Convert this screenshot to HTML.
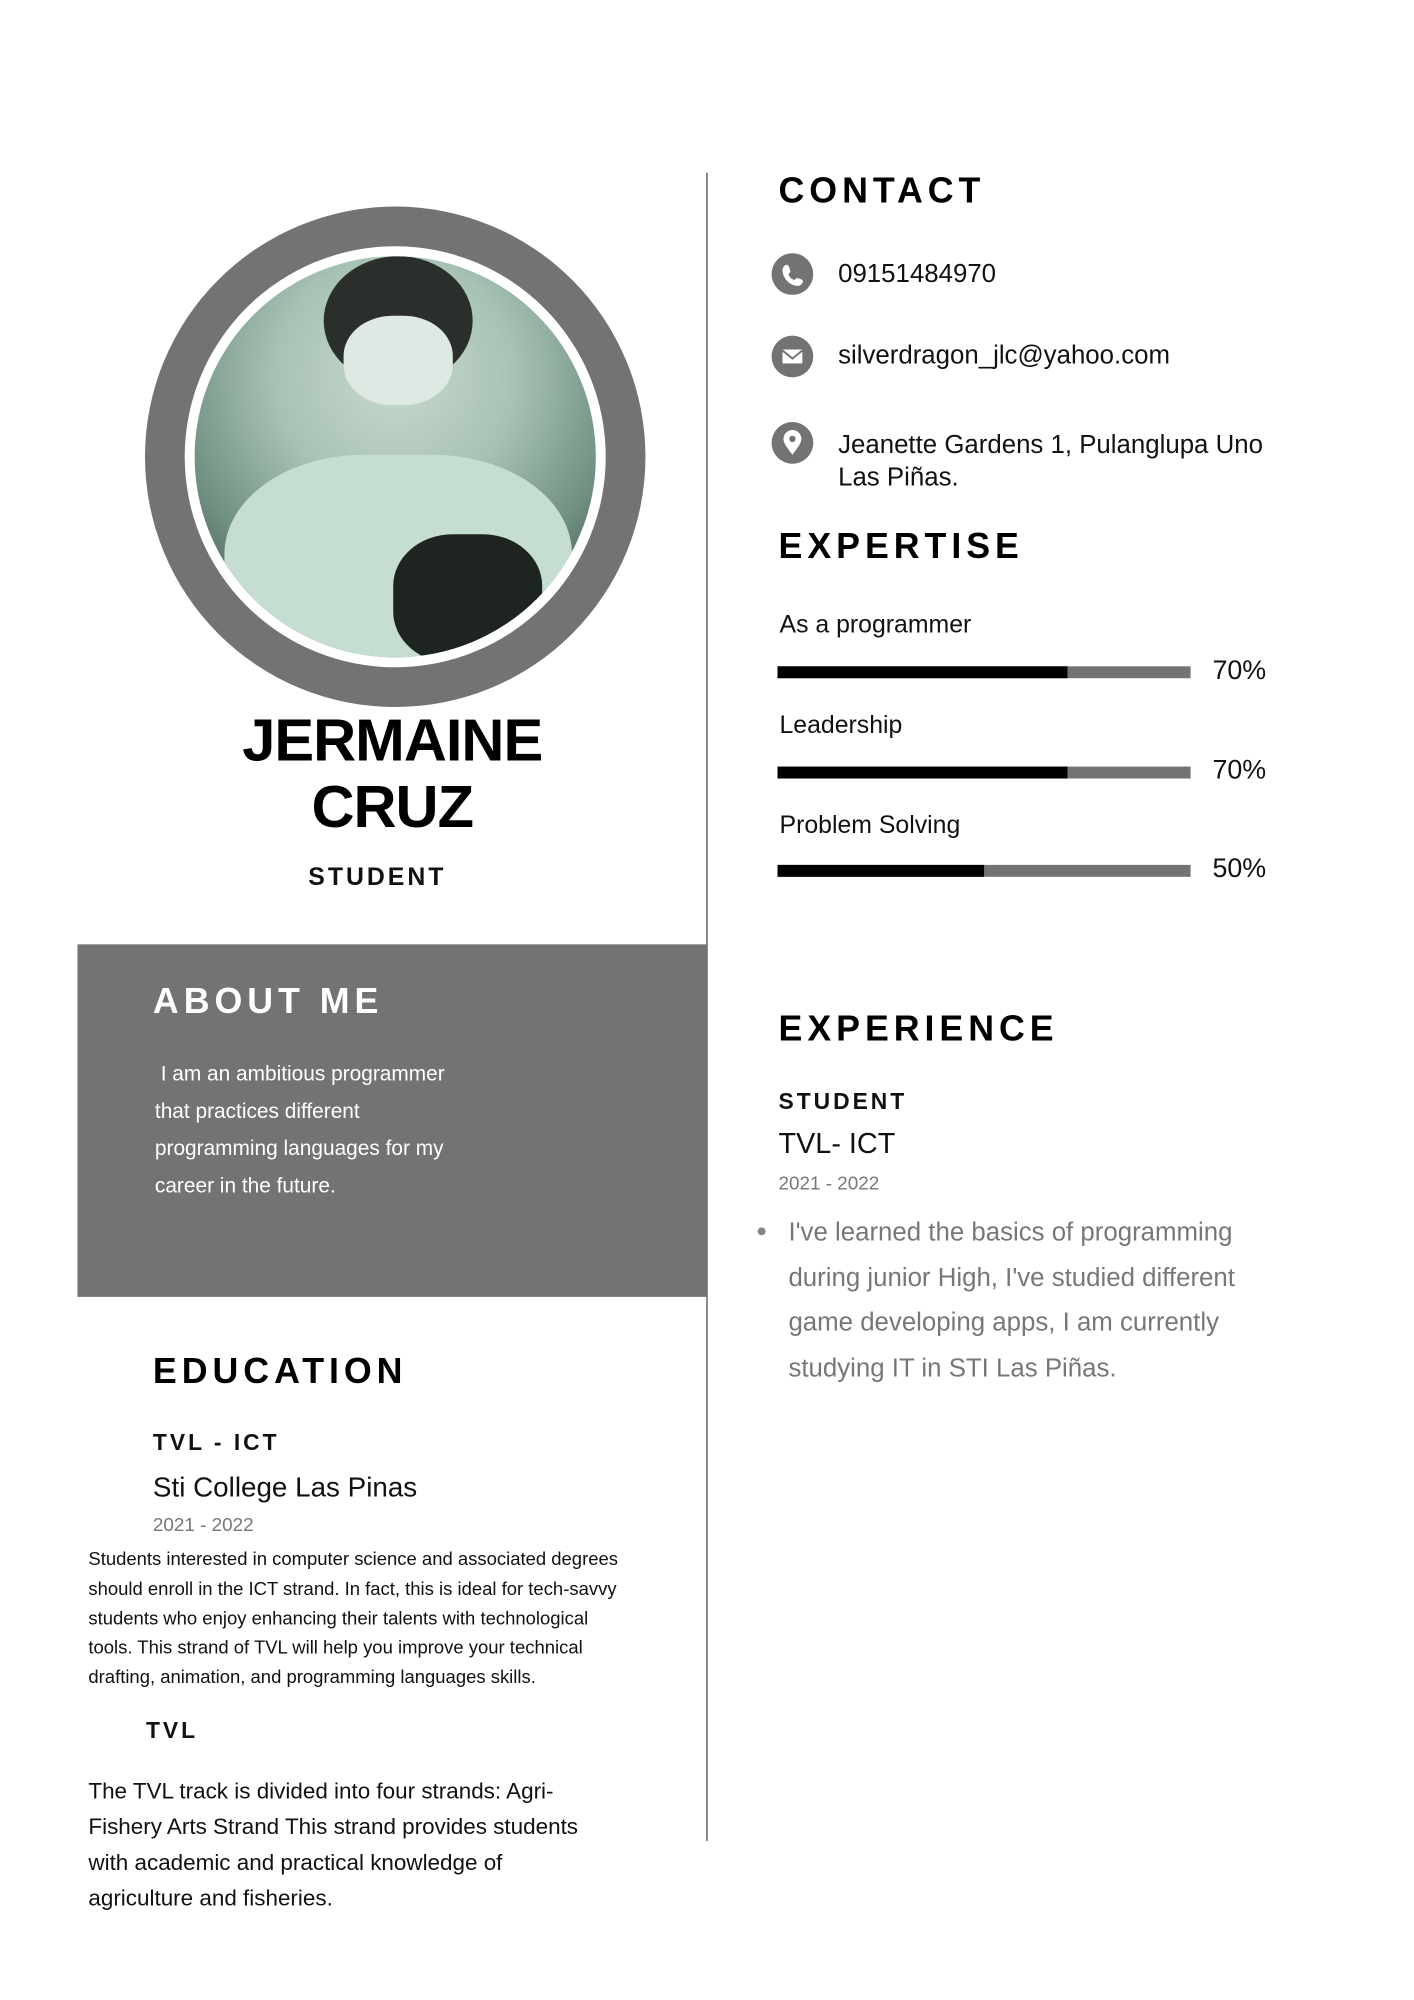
<!DOCTYPE html>
<html><head><meta charset="utf-8"><style>
*{margin:0;padding:0;box-sizing:border-box}
body{width:1414px;height:2000px;background:#fff;position:relative;font-family:"Liberation Sans",sans-serif;color:#111;overflow:hidden}
#w{position:absolute;left:0;top:0;width:1414px;height:2000px;transform:scale(0.993);transform-origin:0 0}
.a{position:absolute;white-space:nowrap}
.h{font-weight:bold;letter-spacing:5px;font-size:36px;color:#000}
.ic{position:absolute;width:42px;height:42px;border-radius:50%;background:#737373}
.bar{position:absolute;left:783px;width:416px;height:12px;background:#737373}
.bar i{display:block;height:12px;background:#000}
.pct{position:absolute;left:1221px;font-size:27px;color:#111}
.lbl{position:absolute;left:785px;font-size:25px}
</style></head><body><div id="w">
<div class="a" style="left:711px;top:174px;width:2px;height:1680px;background:#8a8a8a"></div>
<div class="a" style="left:78px;top:951px;width:634px;height:355px;background:#737373"></div>

<div class="a" style="left:146px;top:208px;width:504px;height:504px;border-radius:50%;background:#737373"></div>
<div class="a" style="left:186px;top:248px;width:424px;height:424px;border-radius:50%;background:#fff"></div>
<div class="a" style="left:196px;top:258px;width:404px;height:404px;border-radius:50%;background:radial-gradient(circle at 50% 30%,#c9d9cf 0,#a7c2b3 35%,#6f8f80 65%,#2d3a33 100%);overflow:hidden">
<div style="position:absolute;left:130px;top:0;width:150px;height:130px;border-radius:50%;background:#2a2f2c"></div>
<div style="position:absolute;left:150px;top:60px;width:110px;height:90px;border-radius:45%;background:#dfe9e3"></div>
<div style="position:absolute;left:30px;top:200px;width:350px;height:250px;border-radius:40% 40% 0 0;background:#c6ddd2"></div>
<div style="position:absolute;left:200px;top:280px;width:150px;height:130px;border-radius:40%;background:#1e2520"></div>
</div>

<div class="a" style="left:0;width:790px;top:712px;text-align:center;font-size:60px;font-weight:bold;line-height:67px;color:#000;letter-spacing:-1px">JERMAINE<br>CRUZ</div>
<div class="a" style="left:0;width:760px;top:869px;text-align:center;font-size:25px;font-weight:bold;letter-spacing:3px">STUDENT</div>

<div class="a h" style="left:784px;top:171px">CONTACT</div>
<div class="ic" style="left:777px;top:255px"><svg width="42" height="42" viewBox="0 0 42 42"><path d="M14 12c2-1 3 0 4 3l1 3c0 1-1 2-2 3 1 3 3 5 6 6 1-1 2-2 3-2l3 1c3 1 3 3 2 4-1 2-3 3-5 3-8-1-14-7-15-15 0-3 1-5 3-6z" fill="#fff"/></svg></div>
<div class="a" style="left:844px;top:260px;font-size:26px">09151484970</div>
<div class="ic" style="left:777px;top:338px"><svg width="42" height="42" viewBox="0 0 42 42"><rect x="11" y="14" width="20" height="14" rx="1" fill="#fff"/><path d="M11 15l10 8 10-8" fill="none" stroke="#737373" stroke-width="2"/></svg></div>
<div class="a" style="left:844px;top:342px;font-size:26px">silverdragon_jlc@yahoo.com</div>
<div class="ic" style="left:777px;top:425px"><svg width="42" height="42" viewBox="0 0 42 42"><path d="M21 33c-6-8-9-12-9-16a9 9 0 0 1 18 0c0 4-3 8-9 16z" fill="#fff"/><circle cx="21" cy="17" r="3.2" fill="#737373"/></svg></div>
<div class="a" style="left:844px;top:431px;font-size:26px;line-height:33px">Jeanette Gardens 1, Pulanglupa Uno<br>Las Piñas.</div>

<div class="a h" style="left:784px;top:529px">EXPERTISE</div>
<div class="lbl" style="top:615px">As a programmer</div>
<div class="bar" style="top:671px"><i style="width:292px"></i></div><div class="pct" style="top:660px">70%</div>
<div class="lbl" style="top:716px">Leadership</div>
<div class="bar" style="top:772px"><i style="width:292px"></i></div><div class="pct" style="top:760px">70%</div>
<div class="lbl" style="top:817px">Problem Solving</div>
<div class="bar" style="top:871px"><i style="width:208px"></i></div><div class="pct" style="top:859px">50%</div>

<div class="a h" style="left:154px;top:987px;color:#fff">ABOUT ME</div>
<div class="a" style="left:156px;top:1063px;font-size:21px;line-height:37.5px;color:#fff">&nbsp;I am an ambitious programmer<br>that practices different<br>programming languages for my<br>career in the future.</div>

<div class="a h" style="left:784px;top:1015px">EXPERIENCE</div>
<div class="a" style="left:784px;top:1096px;font-size:23px;font-weight:bold;letter-spacing:3px">STUDENT</div>
<div class="a" style="left:784px;top:1136px;font-size:29px">TVL- ICT</div>
<div class="a" style="left:784px;top:1182px;font-size:19px;color:#777">2021 - 2022</div>
<div class="a" style="left:763px;top:1236px;width:8px;height:8px;border-radius:50%;background:#888"></div>
<div class="a" style="left:794px;top:1218px;font-size:26px;line-height:45.5px;color:#777">I've learned the basics of programming<br>during junior High, I've studied different<br>game developing apps, I am currently<br>studying IT in STI Las Piñas.</div>

<div class="a h" style="left:154px;top:1360px">EDUCATION</div>
<div class="a" style="left:154px;top:1439px;font-size:23px;font-weight:bold;letter-spacing:3px">TVL - ICT</div>
<div class="a" style="left:154px;top:1482px;font-size:28px">Sti College Las Pinas</div>
<div class="a" style="left:154px;top:1526px;font-size:19px;color:#777">2021 - 2022</div>
<div class="a" style="left:89px;top:1555px;font-size:18.6px;line-height:29.8px">Students interested in computer science and associated degrees<br>should enroll in the ICT strand. In fact, this is ideal for tech-savvy<br>students who enjoy enhancing their talents with technological<br>tools. This strand of TVL will help you improve your technical<br>drafting, animation, and programming languages skills.</div>
<div class="a" style="left:147px;top:1729px;font-size:23px;font-weight:bold;letter-spacing:3px">TVL</div>
<div class="a" style="left:89px;top:1786px;font-size:22.6px;line-height:36px">The TVL track is divided into four strands: Agri-<br>Fishery Arts Strand This strand provides students<br>with academic and practical knowledge of<br>agriculture and fisheries.</div>
</div></body></html>
